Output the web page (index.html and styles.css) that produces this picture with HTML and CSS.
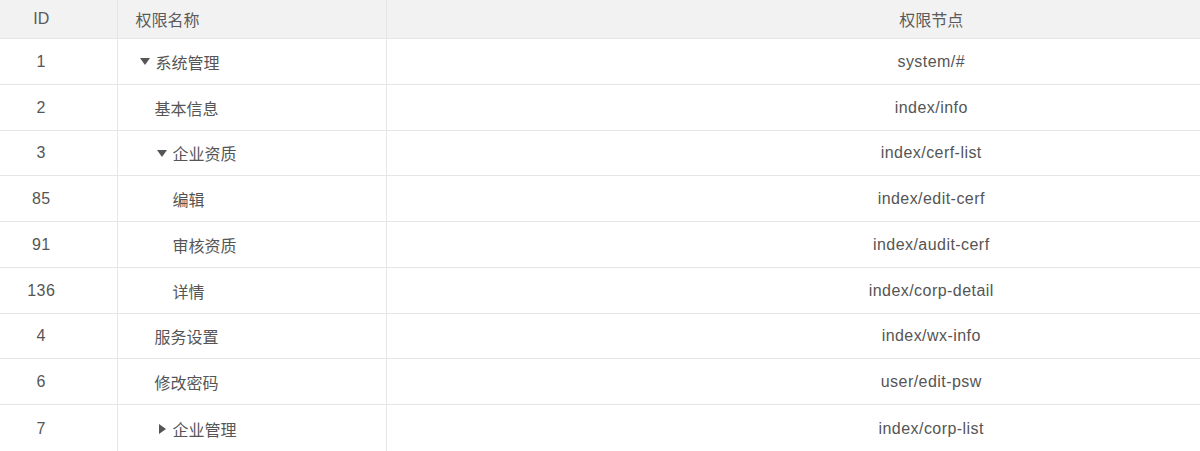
FILE: index.html
```html
<!DOCTYPE html>
<html lang="zh-CN">
<head>
<meta charset="utf-8">
<title>权限列表</title>
<link rel="stylesheet" href="styles.css">
</head>
<body>
<table class="perm-table">
  <colgroup>
    <col class="col-id">
    <col class="col-name">
    <col class="col-node">
  </colgroup>
  <thead>
    <tr>
      <th class="cell-id">ID</th>
      <th class="cell-name">权限名称</th>
      <th class="cell-node">权限节点</th>
    </tr>
  </thead>
  <tbody>
    <tr>
      <td class="cell-id">1</td>
      <td class="cell-name"><span class="tree lvl-0"><span class="toggle open"></span>系统管理</span></td>
      <td class="cell-node">system/#</td>
    </tr>
    <tr>
      <td class="cell-id">2</td>
      <td class="cell-name"><span class="tree lvl-1">基本信息</span></td>
      <td class="cell-node">index/info</td>
    </tr>
    <tr>
      <td class="cell-id">3</td>
      <td class="cell-name"><span class="tree lvl-1b"><span class="toggle open"></span>企业资质</span></td>
      <td class="cell-node">index/cerf-list</td>
    </tr>
    <tr>
      <td class="cell-id">85</td>
      <td class="cell-name"><span class="tree lvl-2">编辑</span></td>
      <td class="cell-node">index/edit-cerf</td>
    </tr>
    <tr>
      <td class="cell-id">91</td>
      <td class="cell-name"><span class="tree lvl-2">审核资质</span></td>
      <td class="cell-node">index/audit-cerf</td>
    </tr>
    <tr>
      <td class="cell-id">136</td>
      <td class="cell-name"><span class="tree lvl-2">详情</span></td>
      <td class="cell-node">index/corp-detail</td>
    </tr>
    <tr>
      <td class="cell-id">4</td>
      <td class="cell-name"><span class="tree lvl-1">服务设置</span></td>
      <td class="cell-node">index/wx-info</td>
    </tr>
    <tr>
      <td class="cell-id">6</td>
      <td class="cell-name"><span class="tree lvl-1">修改密码</span></td>
      <td class="cell-node">user/edit-psw</td>
    </tr>
    <tr class="last-row">
      <td class="cell-id">7</td>
      <td class="cell-name"><span class="tree lvl-1b"><span class="toggle closed"></span>企业管理</span></td>
      <td class="cell-node">index/corp-list</td>
    </tr>
  </tbody>
</table>
</body>
</html>
```
FILE: styles.css
```css
html, body {
  margin: 0;
  padding: 0;
  background: #fff;
  overflow: hidden;
}

body {
  font-family: "Liberation Sans", "Noto Sans CJK SC", sans-serif;
  font-size: 16px;
  color: #555;
}

.perm-table {
  width: 1200px;
  border-collapse: collapse;
  table-layout: fixed;
}

.col-id { width: 117px; }
.col-name { width: 269px; }
.col-node { width: auto; }

.perm-table th,
.perm-table td {
  padding: 0;
  border-bottom: 1px solid #e6e6e6;
  border-right: 1px solid #e6e6e6;
  font-weight: normal;
  white-space: nowrap;
}

.perm-table th:last-child,
.perm-table td:last-child {
  border-right: none;
}

.perm-table thead th {
  height: 38px;
  background: #f2f2f2;
  color: #5a5a5a;
}

.perm-table tbody td {
  height: 45.75px;
  padding-top: 1px;
  box-sizing: border-box;
}

.perm-table tbody .last-row td {
  height: 48px;
  padding-top: 0;
}

.cell-id {
  text-align: center;
  padding-right: 34px !important;
}

td.cell-id,
td.cell-node {
  letter-spacing: 0.45px;
}

.cell-name {
  text-align: left;
}

th.cell-name {
  padding-left: 18px !important;
}

td.cell-name {
  padding-left: 21px !important;
}

.cell-node {
  text-align: center;
  padding-left: 276px !important;
}

.tree {
  display: inline-flex;
  align-items: center;
}

.lvl-0 { padding-left: 0; }
.lvl-1 { padding-left: 16px; }
.lvl-1b { padding-left: 17px; }
.lvl-2 { padding-left: 34px; }

.toggle {
  display: inline-flex;
  width: 17px;
  height: 12px;
  align-items: center;
  justify-content: flex-start;
  padding-left: 1px;
  box-sizing: border-box;
}

.toggle.open::before {
  content: "";
  width: 0;
  height: 0;
  border-left: 5px solid transparent;
  border-right: 5px solid transparent;
  border-top: 7px solid #555;
}

.toggle.closed::before {
  content: "";
  width: 0;
  height: 0;
  margin-left: 2px;
  border-top: 5px solid transparent;
  border-bottom: 5px solid transparent;
  border-left: 7px solid #555;
}
```
